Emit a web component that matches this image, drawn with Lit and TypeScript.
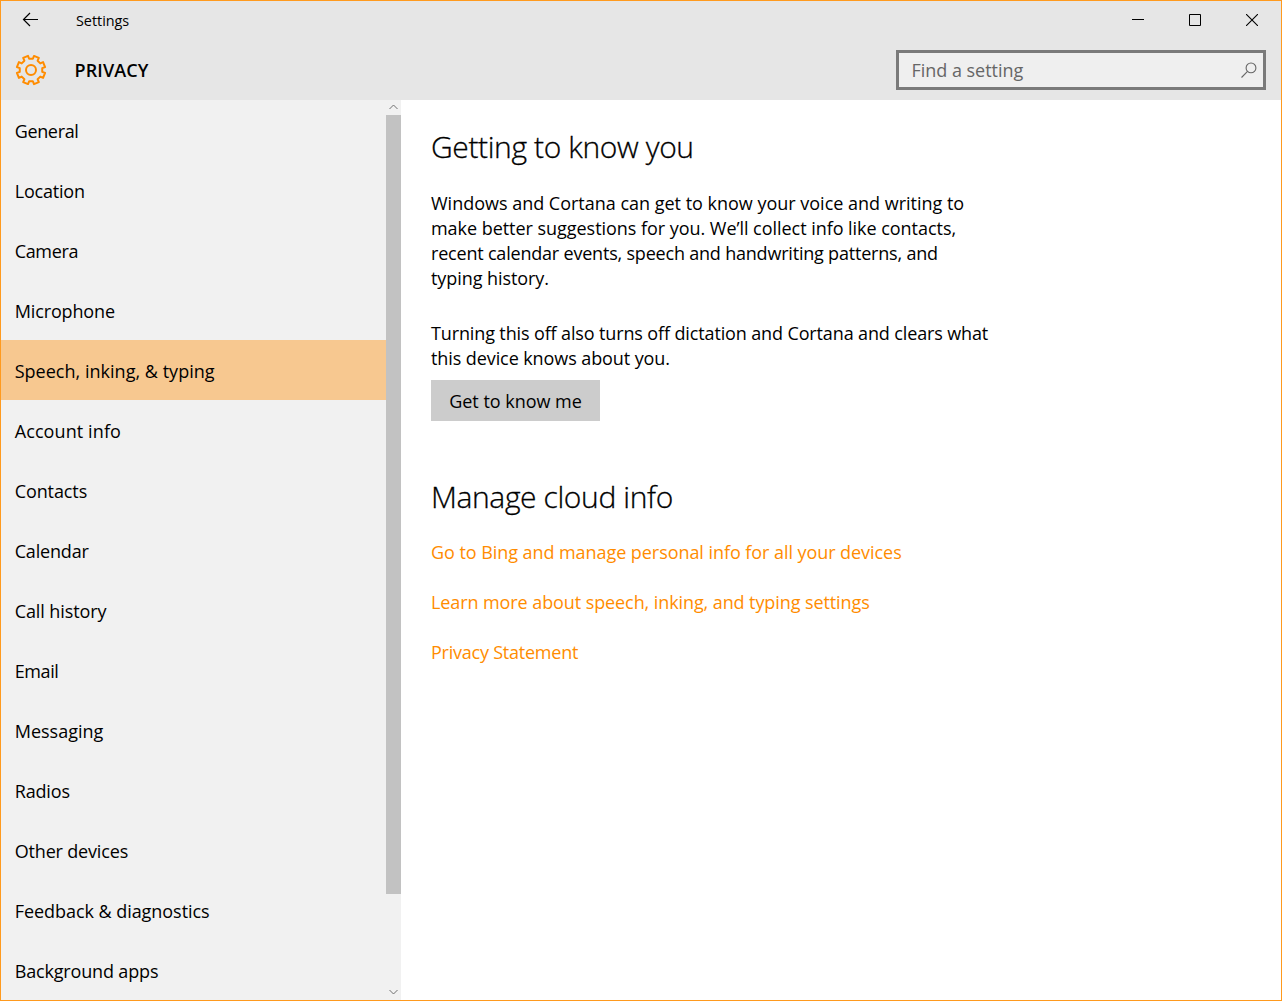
import { LitElement, html, css, svg } from "lit";
import { customElement, property } from "lit/decorators.js";

interface Line {
  text: string;
  tracking?: number;
}

const NAV: Line[] = [
  { text: "General", tracking: -0.35 },
  { text: "Location", tracking: -0.2 },
  { text: "Camera", tracking: -0.35 },
  { text: "Microphone", tracking: -0.13 },
  { text: "Speech, inking, & typing", tracking: 0.02 },
  { text: "Account info", tracking: 0.1 },
  { text: "Contacts", tracking: -0.1 },
  { text: "Calendar", tracking: -0.18 },
  { text: "Call history", tracking: -0.1 },
  { text: "Email", tracking: -0.4 },
  { text: "Messaging", tracking: 0 },
  { text: "Radios", tracking: -0.15 },
  { text: "Other devices", tracking: -0.17 },
  { text: "Feedback & diagnostics", tracking: -0.05 },
  { text: "Background apps", tracking: -0.16 },
];

const INTRO: Line[] = [
  { text: "Windows and Cortana can get to know your voice and writing to", tracking: -0.01 },
  { text: "make better suggestions for you. We’ll collect info like contacts,", tracking: -0.04 },
  { text: "recent calendar events, speech and handwriting patterns, and", tracking: -0.2 },
  { text: "typing history.", tracking: -0.07 },
];

const WARNING: Line[] = [
  { text: "Turning this off also turns off dictation and Cortana and clears what", tracking: -0.13 },
  { text: "this device knows about you.", tracking: -0.09 },
];

const LINKS: Line[] = [
  { text: "Go to Bing and manage personal info for all your devices", tracking: -0.06 },
  { text: "Learn more about speech, inking, and typing settings", tracking: -0.09 },
  { text: "Privacy Statement", tracking: -0.23 },
];

const track = (l: Line) => `letter-spacing:${l.tracking ?? 0}px`;

/** Outline of an eight-toothed gear centred on (16, 16). */
function gearPath(): string {
  const pts: string[] = [];
  const at = (deg: number, r: number) => {
    const a = (deg * Math.PI) / 180;
    pts.push(`${(16 + r * Math.cos(a)).toFixed(2)} ${(16 + r * Math.sin(a)).toFixed(2)}`);
  };
  for (let k = 0; k < 8; k++) {
    const c = 22.5 + 45 * k;
    at(c - 13, 11.4);
    at(c - 10.5, 14.4);
    at(c + 10.5, 14.4);
    at(c + 13, 11.4);
  }
  return `M${pts.join("L")}Z`;
}

@customElement("title-bar")
export class TitleBar extends LitElement {
  static styles = css`
    :host { display: flex; height: 39px; align-items: flex-start; }
    .back { width: 16px; height: 16px; margin: 11px 0 0 21px; }
    .title { flex: 1; margin: 10px 0 0 38px; font-size: 14.4px; line-height: 20px; letter-spacing: -0.02px; }
    .controls { display: flex; margin-right: 1px; }
    .control { width: 57px; height: 37px; display: flex; align-items: center; justify-content: center; }
    svg { display: block; fill: none; stroke: #000; }
    .control svg { margin-top: 1px; }
  `;
  render() {
    return html`
      <svg class="back" viewBox="0 0 16 16" stroke-width="1.2"><path d="M1.5 7.5H16M8 1L1.5 7.5L8 14" /></svg>
      <span class="title">Settings</span>
      <div class="controls">
        <div class="control"><svg width="12" height="12"><path d="M0 5.5H12" /></svg></div>
        <div class="control"><svg width="12" height="12"><path d="M.5 .5H11.5V11.5H.5Z" /></svg></div>
        <div class="control"><svg width="12" height="12"><path d="M0 0L12 12M12 0L0 12" stroke-width="1.1" /></svg></div>
      </div>
    `;
  }
}

@customElement("page-header")
export class PageHeader extends LitElement {
  static styles = css`
    :host { display: flex; height: 60px; align-items: center; padding: 0 15px 0 14px; }
    .gear { display: block; width: 32px; height: 32px; fill: none; stroke: #ff8c00; stroke-width: 2; stroke-linejoin: round; }
    .name { flex: 1; margin-left: 27.6px; font-size: 18px; font-weight: 600; line-height: 24px; letter-spacing: 0.08px; }
    .search {
      box-sizing: border-box; width: 370px; height: 40px; border: 3px solid #7a7a7a; background: #efefef;
      display: flex; align-items: center; justify-content: space-between; padding: 0 6px 0 12.6px;
      color: #666; font-size: 18px; line-height: 24px; letter-spacing: -0.04px;
    }
    .glass { display: block; fill: none; stroke: #666; stroke-width: 1.1; }
  `;
  render() {
    return html`
      <svg class="gear" viewBox="0 0 32 32">${svg`<path d=${gearPath()} />`}<circle cx="16" cy="16" r="5" /></svg>
      <span class="name">PRIVACY</span>
      <div class="search">
        <span>Find a setting</span>
        <svg class="glass" width="16" height="16"><circle cx="10" cy="5.9" r="4.9" /><path d="M6.5 9.4L.5 15.5" /></svg>
      </div>
    `;
  }
}

@customElement("side-nav")
export class SideNav extends LitElement {
  @property() selected = "";
  static styles = css`
    :host { display: flex; width: 400px; background: #f1f1f1; overflow: hidden; }
    .list { flex: 1; min-width: 0; }
    .item { height: 60px; line-height: 60px; padding: 1px 0 0 13.7px; box-sizing: border-box; font-size: 18px; white-space: nowrap; }
    .active { background: #f7c890; }
    .bar { width: 15px; display: flex; flex-direction: column; height: 100%; }
    .thumb { height: 779px; background: #c2c2c2; }
    .gap { flex: 1; }
    .arrow { display: block; width: 15px; height: 15px; fill: none; stroke: #707070; }
  `;
  render() {
    return html`
      <div class="list">
        ${NAV.map(
          (i) => html`<div class="item ${i.text === this.selected ? "active" : ""}" style=${track(i)}>${i.text}</div>`,
        )}
      </div>
      <div class="bar">
        <svg class="arrow"><path d="M3.5 9L7.5 5L11.5 9" /></svg>
        <div class="thumb"></div>
        <div class="gap"></div>
        <svg class="arrow"><path d="M3.5 5L7.5 9L11.5 5" /></svg>
      </div>
    `;
  }
}

@customElement("settings-page")
export class SettingsPage extends LitElement {
  static styles = css`
    :host { display: block; flex: 1; background: #fff; padding: 27px 0 0 30px; font-size: 18px; line-height: 25px; white-space: nowrap; }
    h1 { margin: 0; font-size: 30px; font-weight: 300; line-height: 40px; letter-spacing: -0.38px; -webkit-text-stroke: 0.3px #000; }
    p { margin: 0 0 30px; }
    h1 + p { margin-top: 24px; }
    .line { display: block; }
    .button {
      display: block; width: 169px; height: 41px; margin: -21px 0 56px; padding: 2px 0 0; border: 0;
      background: #ccc; color: #000; font: inherit; line-height: 39px; text-align: center; letter-spacing: -0.02px;
    }
    .links { display: flex; flex-direction: column; align-items: flex-start; gap: 25px; margin-top: 23px; }
    .link { color: #ff8c00; text-decoration: none; }
  `;
  private lines(list: Line[]) {
    return html`<p>${list.map((l) => html`<span class="line" style=${track(l)}>${l.text}</span>`)}</p>`;
  }
  render() {
    return html`
      <h1>Getting to know you</h1>
      ${this.lines(INTRO)} ${this.lines(WARNING)}
      <button class="button">Get to know me</button>
      <h1>Manage cloud info</h1>
      <div class="links">${LINKS.map((l) => html`<a class="link" style=${track(l)}>${l.text}</a>`)}</div>
    `;
  }
}

@customElement("app-root")
export class AppRoot extends LitElement {
  static styles = css`
    :host {
      display: flex; flex-direction: column; box-sizing: border-box; width: 1282px; height: 1001px;
      border: 1px solid #ff9a1e; background: #e6e6e6; color: #000; overflow: hidden;
      font-family: "Open Sans", "Noto Sans", sans-serif;
    }
    .body { display: flex; flex: 1; min-height: 0; }
  `;
  render() {
    return html`
      <title-bar></title-bar>
      <page-header></page-header>
      <div class="body">
        <side-nav selected="Speech, inking, & typing"></side-nav>
        <settings-page></settings-page>
      </div>
    `;
  }
}
